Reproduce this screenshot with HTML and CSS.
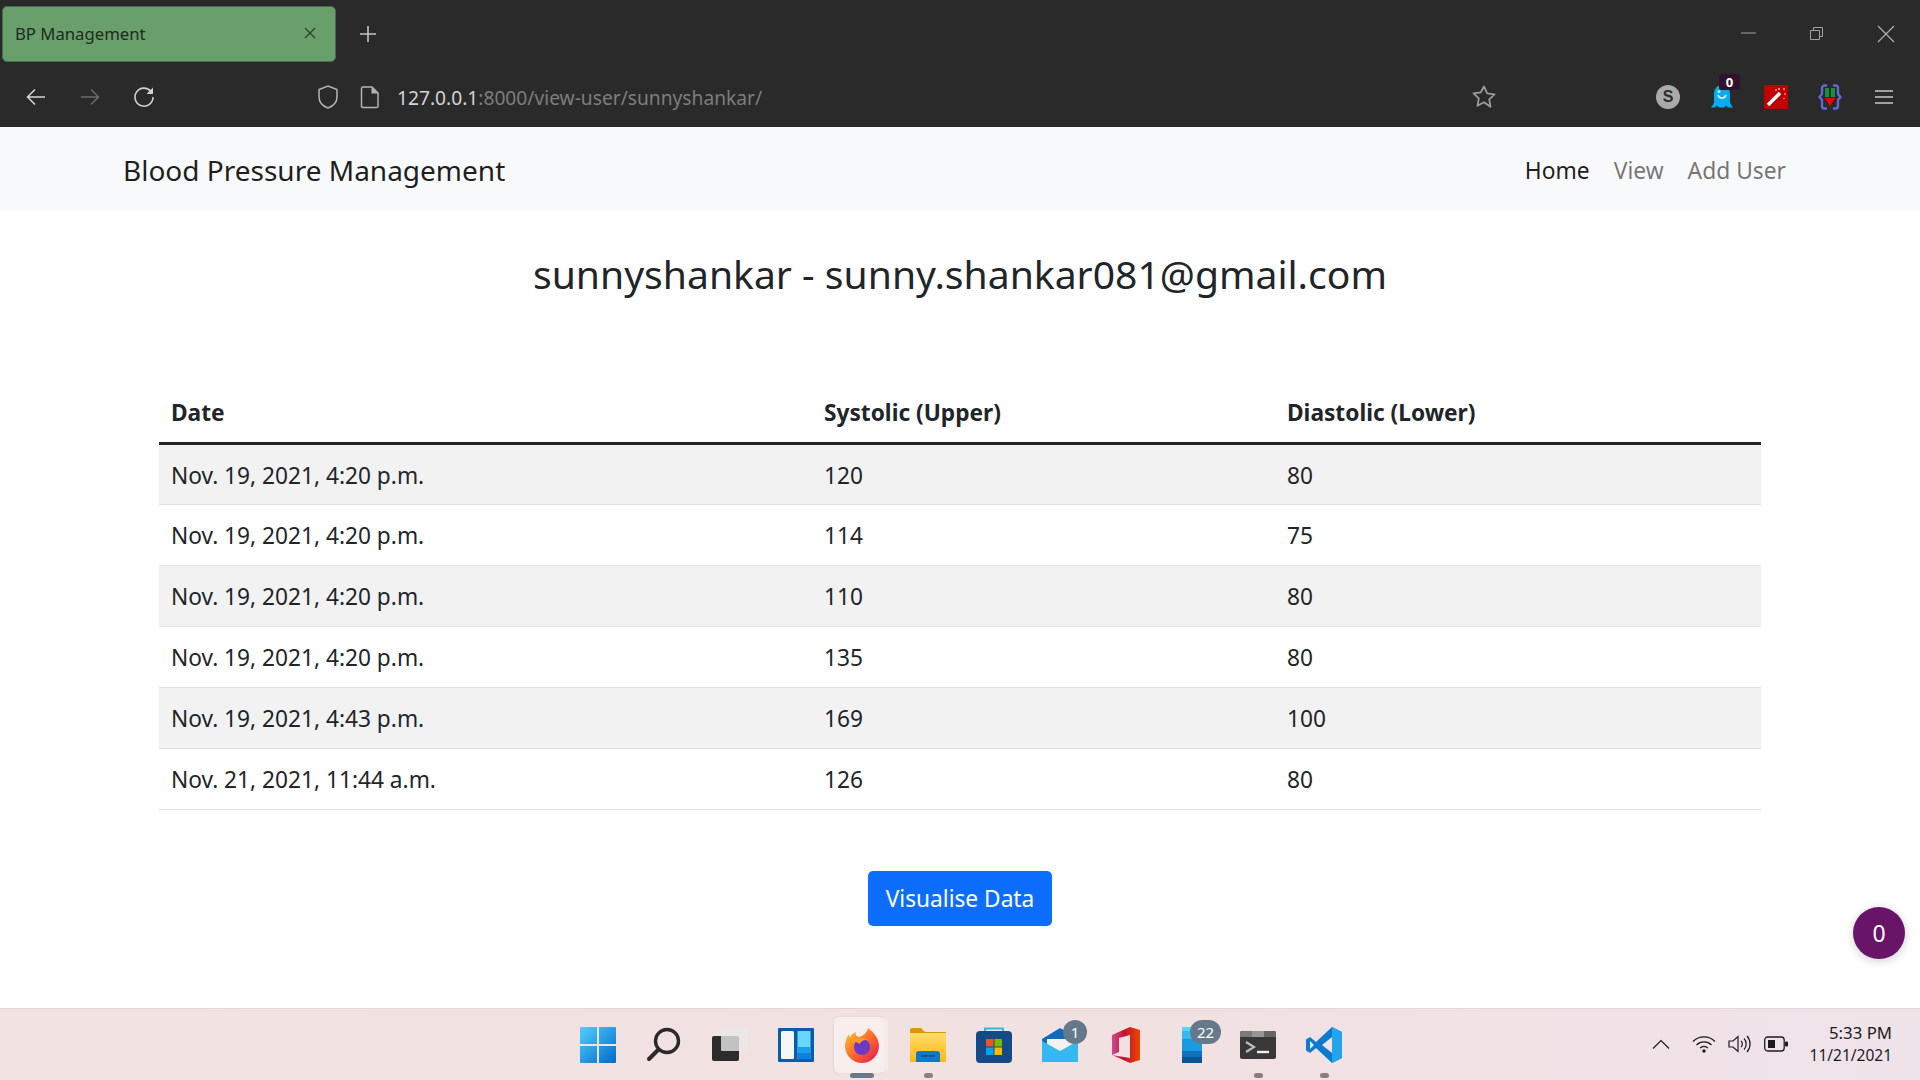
FILE: index.html
```html
<!DOCTYPE html>
<html lang="en">
<head>
  <meta charset="UTF-8">
  <title>BP Management</title>
  <link rel="stylesheet" href="styles.css">
</head>
<body>

  <!-- Browser chrome -->
  <header class="browser">
    <div class="tab-row">
      <div class="tab">
        <span class="tab-title">BP Management</span>
        <svg class="tab-close" width="12" height="12" viewBox="0 0 12 12"><path d="M1 1l10 10M11 1L1 11" stroke="#2c3b2d" stroke-width="1.1"/></svg>
      </div>
      <svg class="new-tab" width="18" height="18" viewBox="0 0 18 18"><path d="M9 1v16M1 9h16" stroke="#c4c4c4" stroke-width="1.6"/></svg>
      <div class="window-btns">
        <svg width="16" height="16" viewBox="0 0 16 16"><path d="M0 8h15" stroke="#a0a0a0" stroke-width="1"/></svg>
        <svg width="16" height="16" viewBox="0 0 16 16"><path d="M1.500 5.500h9v9h-9zM4.500 5V2.500h9v9H11" fill="none" stroke="#a0a0a0" stroke-width="1"/></svg>
        <svg width="18" height="18" viewBox="0 0 18 18"><path d="M1 1l16 16M17 1L1 17" stroke="#b0b0b0" stroke-width="1.1"/></svg>
      </div>
    </div>
    <div class="toolbar">
      <div class="tool"><svg width="24" height="24" viewBox="0 0 24 24"><path d="M21 12H4M11 4.500L3.500 12l7.500 7.500" fill="none" stroke="#d8d8d8" stroke-width="1.500"/></svg></div>
      <div class="tool"><svg width="24" height="24" viewBox="0 0 24 24"><path d="M3 12h17M13 4.500l7.500 7.500-7.500 7.500" fill="none" stroke="#6b6b6b" stroke-width="1.500"/></svg></div>
      <div class="tool"><svg width="24" height="24" viewBox="0 0 24 24"><path d="M19 6.500A9 9 0 1 0 21 12" fill="none" stroke="#d0d0d0" stroke-width="1.600"/><path d="M21 2.500v6.500h-6.500z" fill="#d0d0d0"/></svg></div>
      <div class="address">
        <svg width="24" height="26" viewBox="0 0 24 26"><path d="M12 2l9 3.500v7.500c0 5.500-3.500 9-9 11-5.500-2-9-5.500-9-11V5.500z" fill="none" stroke="#b4b4b4" stroke-width="1.500"/></svg>
        <svg class="page-icon" width="20" height="24" viewBox="0 0 20 24"><path d="M3 2h9l6 6v13a1.500 1.500 0 0 1-1.500 1.500h-13A1.500 1.500 0 0 1 1.500 21V3.500A1.500 1.500 0 0 1 3 2z" fill="none" stroke="#b4b4b4" stroke-width="1.500"/><path d="M11.500 2v6.500H18" fill="#b4b4b4"/></svg>
        <span class="url"><span class="url-host">127.0.0.1</span>:8000/view-user/sunnyshankar/</span>
      </div>
      <svg class="star" width="26" height="26" viewBox="0 0 26 26"><path d="M13 2.500l3.200 6.800 7.300 1-5.300 5.100 1.300 7.400L13 18.300l-6.500 3.500 1.300-7.400-5.300-5.100 7.300-1z" fill="none" stroke="#9a9a9a" stroke-width="1.800" stroke-linejoin="round"/></svg>
      <div class="extensions">
        <div class="tool"><span class="ext-s">S</span></div>
        <div class="tool ghost">
          <svg width="22" height="26" viewBox="0 0 22 26"><path d="M11 1c5 0 8 4 8 9v9l3 4.500h-5l-2-2-2 2h-5l-2-2-2 2H0L3 19v-9c0-5 3-9 8-9z" fill="#00adef"/><path d="M7 11c1 4 7 4 8 0" fill="none" stroke="#d5f3ff" stroke-width="1.600"/><circle cx="8" cy="7.500" r="1.500" fill="#d5f3ff"/></svg>
          <span class="ghost-badge">0</span>
        </div>
        <div class="tool">
          <svg width="24" height="24" viewBox="0 0 24 24"><rect width="24" height="24" fill="#c00000"/><path d="M4 20L16 8" stroke="#fff" stroke-width="3.500"/><path d="M11 5h2M19 4h2M20 9h2M15 3v2M20 13v1" stroke="#ffd9d9" stroke-width="1.200"/></svg>
        </div>
        <div class="tool">
          <svg width="24" height="26" viewBox="0 0 24 26"><path d="M9 1.500H6.500A2.500 2.500 0 0 0 4 4v6l-2.500 3L4 16v6a2.500 2.500 0 0 0 2.500 2.500H9M15 1.500h2.500A2.500 2.500 0 0 1 20 4v6l2.500 3-2.500 3v6a2.500 2.500 0 0 1-2.500 2.500H15" fill="none" stroke="#6168d8" stroke-width="2.400"/><path d="M7 4h4v9H7zM13 4h4v9h-4z" fill="#14913c"/><path d="M6.500 14h11L12 22z" fill="#f40000"/></svg>
        </div>
        <div class="tool"><svg width="20" height="18" viewBox="0 0 20 18"><path d="M1 3h18M1 9h18M1 15h18" stroke="#a0a0a0" stroke-width="2"/></svg></div>
      </div>
    </div>
  </header>

  <!-- Navbar -->
  <nav class="navbar">
    <a class="brand">Blood Pressure Management</a>
    <div class="nav-links">
      <a class="nav-link active">Home</a>
      <a class="nav-link">View</a>
      <a class="nav-link">Add User</a>
    </div>
  </nav>

  <!-- Page content -->
  <main class="content">
    <h2 class="user-title">sunnyshankar - sunny.shankar081@gmail.com</h2>

    <table class="bp-table">
      <colgroup>
        <col class="col-date">
        <col class="col-sys">
        <col>
      </colgroup>
      <thead>
        <tr><th>Date</th><th>Systolic (Upper)</th><th>Diastolic (Lower)</th></tr>
      </thead>
      <tbody>
        <tr><td>Nov. 19, 2021, 4:20 p.m.</td><td>120</td><td>80</td></tr>
        <tr><td>Nov. 19, 2021, 4:20 p.m.</td><td>114</td><td>75</td></tr>
        <tr><td>Nov. 19, 2021, 4:20 p.m.</td><td>110</td><td>80</td></tr>
        <tr><td>Nov. 19, 2021, 4:20 p.m.</td><td>135</td><td>80</td></tr>
        <tr><td>Nov. 19, 2021, 4:43 p.m.</td><td>169</td><td>100</td></tr>
        <tr><td>Nov. 21, 2021, 11:44 a.m.</td><td>126</td><td>80</td></tr>
      </tbody>
    </table>

    <button class="btn-visualise">Visualise Data</button>
    <div class="counter">0</div>
  </main>

  <!-- Windows taskbar -->
  <footer class="taskbar">
    <div></div>
    <div class="task-icons">
      <div class="task-slot">
        <svg width="36" height="36" viewBox="0 0 36 36"><defs><linearGradient id="win" x1="0" y1="0" x2="1" y2="1"><stop offset="0" stop-color="#4fd0fb"/><stop offset="1" stop-color="#0369c9"/></linearGradient></defs><path d="M1 0h16v17H0V1a1 1 0 0 1 1-1zM19 0h16a1 1 0 0 1 1 1v16H19zM0 19h17v17H1a1 1 0 0 1-1-1zM19 19h17v16a1 1 0 0 1-1 1H19z" fill="url(#win)"/></svg>
      </div>
      <div class="task-slot">
        <svg width="36" height="36" viewBox="0 0 36 36"><circle cx="21" cy="14" r="11.500" fill="none" stroke="#2a2a2a" stroke-width="3.400"/><path d="M12.500 22.500L3 32" stroke="#2a2a2a" stroke-width="4" stroke-linecap="round"/></svg>
      </div>
      <div class="task-slot">
        <svg width="36" height="36" viewBox="0 0 36 36"><rect x="0" y="9" width="27" height="25" rx="2" fill="#2c2c2c"/><rect x="9" y="0" width="27" height="24" rx="1" fill="#e8e8e8" fill-opacity=".8"/></svg>
      </div>
      <div class="task-slot">
        <svg width="36" height="34" viewBox="0 0 36 34"><rect width="36" height="34" rx="1" fill="#0a5bab"/><rect x="3" y="3" width="13" height="28" rx="1.500" fill="#f4f6f8"/><rect x="19.500" y="3" width="13" height="28" fill="#66d8ff"/><rect x="19.500" y="19" width="13" height="6" fill="#1a9ef0"/><rect x="19.500" y="25" width="13" height="6" fill="#0f7fd8"/></svg>
      </div>
      <div class="task-slot firefox-slot">
        <div class="hover-box"></div>
        <svg class="slot-icon" width="36" height="36" viewBox="0 0 36 36"><defs><linearGradient id="fx" x1="0" y1="0" x2="1" y2="1"><stop offset="0" stop-color="#ffcb2e"/><stop offset=".5" stop-color="#ff6a2a"/><stop offset="1" stop-color="#e3125b"/></linearGradient></defs><path d="M24 1c6 5 11 10 11 18a17 17 0 0 1-34 0c0-5 2-9 4-12l1 4c1-3 3-5 6-6-1 3 0 4 3 5 4-1 8-4 9-9z" fill="url(#fx)"/><circle cx="18" cy="20" r="8" fill="#6b3bc4"/><path d="M7 14c4-4 12-4 16-1-4 0-6 1-7 4-3-2-6-3-9-3z" fill="#ff9a28"/></svg>
        <span class="run-bar"></span>
      </div>
      <div class="task-slot">
        <svg width="36" height="34" viewBox="0 0 36 34"><defs><linearGradient id="dir" x1="0" y1="0" x2="0" y2="1"><stop offset="0" stop-color="#ffdc6b"/><stop offset="1" stop-color="#fbb812"/></linearGradient></defs><path d="M0 2a2 2 0 0 1 2-2h9l4 4h21v6H0z" fill="#d99a06"/><rect y="5" width="36" height="29" rx="1" fill="url(#dir)"/><path d="M6 34V26a3 3 0 0 1 3-3h18a3 3 0 0 1 3 3v8z" fill="#0f78c8"/><path d="M11 28h14" stroke="#0a4f8f" stroke-width="1.500"/></svg>
        <span class="run-dot"></span>
      </div>
      <div class="task-slot">
        <svg width="36" height="36" viewBox="0 0 36 36"><path d="M9 5V1.500h18V5" fill="none" stroke="#2fb6ea" stroke-width="2"/><rect y="4" width="36" height="32" rx="4" fill="#144a85"/><rect x="10" y="12" width="7.500" height="7.500" fill="#f05022"/><rect x="18.500" y="12" width="7.500" height="7.500" fill="#7eb900"/><rect x="10" y="20.500" width="7.500" height="7.500" fill="#00a4ef"/><rect x="18.500" y="20.500" width="7.500" height="7.500" fill="#ffb900"/></svg>
      </div>
      <div class="task-slot">
        <svg width="36" height="34" viewBox="0 0 36 34"><path d="M0 11L18 0l18 11v23H0z" fill="#0f6cbd"/><path d="M5 11h26v14H5z" fill="#f2f2f2"/><path d="M0 13l18 10 18-10v21H0z" fill="#35b8f0"/></svg>
        <span class="task-badge">1</span>
      </div>
      <div class="task-slot">
        <svg width="28" height="36" viewBox="0 0 28 36"><defs><linearGradient id="off" x1="0" y1="0" x2="1" y2="0"><stop offset="0" stop-color="#c74d8e"/><stop offset=".45" stop-color="#c8102e"/><stop offset="1" stop-color="#e84a00"/></linearGradient></defs><path d="M0 8L18 0l10 3v30l-10 3L0 28l18 3V8L7 11v14l-7 3z" fill="url(#off)"/></svg>
      </div>
      <div class="task-slot">
        <svg width="20" height="36" viewBox="0 0 20 36"><rect width="20" height="36" rx="1" fill="#1a9ae0"/><rect width="20" height="4" fill="#4fd8fb"/><rect y="4" width="20" height="8" fill="#38b8ee"/><rect y="24" width="20" height="6" fill="#1070b8"/><rect y="30" width="20" height="6" fill="#0b5596"/></svg>
        <span class="task-badge wide">22</span>
      </div>
      <div class="task-slot">
        <svg width="36" height="28" viewBox="0 0 36 28"><rect width="36" height="28" rx="2" fill="#383838"/><path d="M2 0h10v6H0V2a2 2 0 0 1 2-2z" fill="#7a7a7a"/><rect x="12" width="12" height="6" fill="#969696"/><path d="M24 0h10a2 2 0 0 1 2 2v4H24z" fill="#666"/><path d="M6 11l8 5-8 5" fill="none" stroke="#bdbdbd" stroke-width="2.200"/><path d="M17 21h12" stroke="#eee" stroke-width="2.400"/></svg>
        <span class="run-dot"></span>
      </div>
      <div class="task-slot">
        <svg width="36" height="36" viewBox="0 0 36 36"><path d="M26 0l10 5v26l-10 5L10 21l-6 5-4-2.500V12.500L4 10l6 5z" fill="#0a7bd0"/><path d="M26 0l10 5v26l-10 5z" fill="#25a4ee"/><path d="M26 10v16l-10-8z" fill="#f3e3e3"/><path d="M4 14v8l4-4z" fill="#f3e3e3"/></svg>
        <span class="run-dot"></span>
      </div>
    </div>
    <div class="tray">
      <svg class="chevron" width="18" height="10" viewBox="0 0 18 10"><path d="M1 9.500l8-8 8 8" fill="none" stroke="#1c1c1c" stroke-width="1.200"/></svg>
      <svg width="24" height="18" viewBox="0 0 24 18"><path d="M1 6.500a15.500 15.500 0 0 1 22 0M4.500 10a10.500 10.500 0 0 1 15 0M8 13.200a5.500 5.500 0 0 1 8 0" fill="none" stroke="#1c1c1c" stroke-width="1.200"/><circle cx="12" cy="16" r="1.700" fill="#1c1c1c"/></svg>
      <svg width="24" height="20" viewBox="0 0 24 20"><path d="M1 7v6h4l5 4.500v-15L5 7z" fill="none" stroke="#1c1c1c" stroke-width="1.200"/><path d="M13 7a4 4 0 0 1 0 6M16 4.500a8 8 0 0 1 0 11M19 2a12 12 0 0 1 0 16" fill="none" stroke="#1c1c1c" stroke-width="1.200"/></svg>
      <svg width="24" height="16" viewBox="0 0 24 16"><rect x=".7" y="1" width="19.500" height="14" rx="3" fill="none" stroke="#1c1c1c" stroke-width="1.300"/><rect x="4" y="4" width="7" height="8" fill="#1c1c1c"/><rect x="21" y="5.500" width="3" height="5" rx="1" fill="#1c1c1c"/></svg>
      <div class="clock"><span class="clock-time">5:33 PM</span><span>11/21/2021</span></div>
    </div>
  </footer>

</body>
</html>
```

FILE: styles.css
```css
* {
  box-sizing: border-box;
}
body {
  font-family: "Noto Sans", "Open Sans", Arial, sans-serif;
  margin: 0;
  height: 1080px;
  overflow: hidden;
  display: flex;
  flex-direction: column;
  background-color: white;
  color: #212529;
}

/* browser chrome */
.browser {
  height: 127px;
  background-color: #2a2a2a;
  flex-shrink: 0;
}
.tab-row {
  height: 62px;
  display: flex;
  align-items: flex-start;
}
.tab {
  width: 334px;
  height: 56px;
  margin: 6px 0 0 2px;
  padding: 0 19px 2px 12px;
  display: flex;
  align-items: center;
  justify-content: space-between;
  background-color: #689f6b;
  border: 1px solid #42704a;
  border-radius: 5px;
}
.tab-title {
  font-size: 16.700px;
  color: #1f2a20;
}
.new-tab {
  margin: 25px 0 0 23px;
}
.window-btns {
  margin-left: auto;
  width: 179px;
  padding: 25px 25px 0 0;
  display: flex;
  justify-content: space-between;
}
.toolbar {
  height: 65px;
  padding: 5px 0 0 9px;
  display: flex;
  align-items: center;
}
.tool {
  width: 54px;
  height: 54px;
  display: flex;
  align-items: center;
  justify-content: center;
  position: relative;
}
.address {
  display: flex;
  align-items: center;
  margin-left: 145px;
}
.page-icon {
  margin-left: 20px;
}
.url {
  margin-left: 17px;
  font-size: 19.200px;
  color: #7d7d7d;
}
.url-host {
  color: #d4d4d4;
}
.star {
  margin-left: 709px;
}
.extensions {
  margin-left: auto;
  margin-right: 9px;
  display: flex;
}
.ext-s {
  width: 24px;
  height: 24px;
  border-radius: 50%;
  background-color: #aaa;
  color: #2b2b2b;
  font-family: "Liberation Sans", Arial, sans-serif;
  font-size: 16px;
  font-weight: 700;
  text-align: center;
  line-height: 24px;
}
.ghost-badge {
  position: absolute;
  top: 4px;
  left: 24px;
  width: 21px;
  height: 16px;
  background-color: #30142f;
  border-radius: 2px;
  color: white;
  font-size: 13px;
  font-weight: 700;
  text-align: center;
  line-height: 16px;
}

/* navbar */
.navbar {
  height: 83px;
  flex-shrink: 0;
  padding: 2px 134px 0 123px;
  display: flex;
  align-items: center;
  justify-content: space-between;
  background-color: #f8f9fa;
}
.brand {
  font-size: 28px;
  color: rgba(0, 0, 0, 0.9);
}
.nav-links {
  display: flex;
  gap: 24px;
  padding-top: 1px;
}
.nav-link {
  font-size: 22.800px;
  color: rgba(0, 0, 0, 0.55);
}
.nav-link.active {
  color: rgba(0, 0, 0, 0.9);
}

/* page */
.content {
  flex: 1;
  position: relative;
  padding: 0 159px;
  display: flex;
  flex-direction: column;
  align-items: center;
}
.user-title {
  margin: 32px 0 0;
  height: 64px;
  font-size: 39.100px;
  font-weight: 400;
  line-height: 64px;
}
.bp-table {
  margin-top: 76px;
  width: 100%;
  border-collapse: collapse;
  table-layout: fixed;
  font-size: 22.700px;
}
.col-date {
  width: 653px;
}
.col-sys {
  width: 463px;
}
.bp-table th {
  height: 61px;
  padding: 2px 12px 0;
  text-align: left;
  font-weight: 700;
  border-bottom: 3px solid #212529;
}
.bp-table td {
  height: 61px;
  padding: 2px 12px 0;
  border-bottom: 1.500px solid #dee2e6;
}
.bp-table tbody tr:nth-child(odd) {
  background-color: #f2f2f2;
}
.btn-visualise {
  margin-top: 61px;
  width: 184px;
  height: 55px;
  padding-top: 2px;
  background-color: #0d6efd;
  color: white;
  border: none;
  border-radius: 5px;
  font-family: inherit;
  font-size: 22.700px;
}
.counter {
  position: absolute;
  left: 1853px;
  top: 697px;
  width: 52px;
  height: 52px;
  border-radius: 50%;
  background-color: #681569;
  color: white;
  font-size: 23px;
  text-align: center;
  line-height: 52px;
  box-shadow: 0 2px 10px rgba(0, 0, 0, 0.2);
}

/* taskbar */
.taskbar {
  height: 72px;
  flex-shrink: 0;
  display: grid;
  grid-template-columns: 1fr auto 1fr;
  background: linear-gradient(90deg, #f3e2e2 0%, #f2e1e1 60%, #efe3ea 100%);
  border-top: 1px solid #e6d6d6;
}
.task-icons {
  display: flex;
  margin-left: 2px;
}
.task-slot {
  width: 66px;
  height: 71px;
  position: relative;
  display: flex;
  align-items: center;
  justify-content: center;
}
.hover-box {
  position: absolute;
  left: 5px;
  top: 8px;
  width: 50px;
  height: 56px;
  background-color: #f8eeee;
  border-radius: 5px;
  box-shadow: 5px 0 0 -1px #f6e9e7, 0 0 2px rgba(0, 0, 0, 0.12);
}
.slot-icon {
  position: relative;
}
.run-bar {
  position: absolute;
  left: 21px;
  bottom: 2px;
  width: 24px;
  height: 5px;
  border-radius: 3px;
  background-color: #677a85;
}
.run-dot {
  position: absolute;
  left: 29px;
  bottom: 2px;
  width: 9px;
  height: 5px;
  border-radius: 3px;
  background-color: #8a8080;
}
.task-badge {
  position: absolute;
  top: 11px;
  left: 36px;
  width: 24px;
  height: 24px;
  border-radius: 50%;
  background-color: #65798a;
  color: white;
  font-size: 15px;
  text-align: center;
  line-height: 24px;
}
.task-badge.wide {
  left: 31px;
  width: 31px;
  border-radius: 12px;
}
.tray {
  display: flex;
  align-items: center;
  justify-content: flex-end;
  gap: 12px;
  padding-right: 28px;
  padding-bottom: 2px;
}
.chevron {
  margin-right: 10px;
}
.clock {
  display: flex;
  flex-direction: column;
  align-items: flex-end;
  margin-left: 10px;
  font-size: 15.500px;
  line-height: 23px;
  color: #1c1c1c;
}
.clock-time {
  font-size: 16.800px;
}
```
